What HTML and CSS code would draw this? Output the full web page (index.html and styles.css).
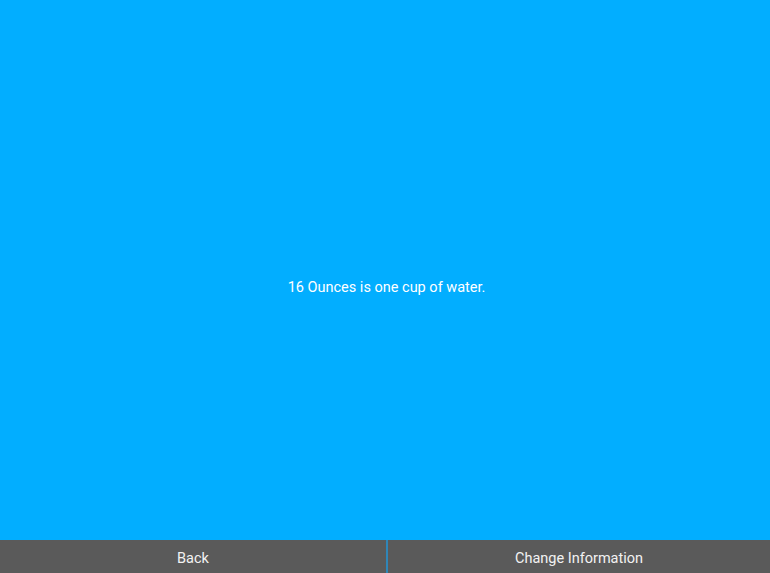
FILE: index.html
```html
<!DOCTYPE html>
<html>
<head>
<meta charset="utf-8">
<link rel="stylesheet" href="styles.css">
</head>
<body>
<div class="app">
  <main class="content">
    <p class="message">16 Ounces is one cup of water.</p>
  </main>
  <footer class="bar">
    <button class="btn">Back</button>
    <div class="divider"></div>
    <button class="btn">Change Information</button>
  </footer>
</div>
</body>
</html>
```
FILE: styles.css
```css
html, body {
  margin: 0;
  padding: 0;
  height: 100%;
}
body {
  font-family: Roboto, "Liberation Sans", sans-serif;
  background: #02aeff;
  color: #fff;
}
.app {
  display: flex;
  flex-direction: column;
  height: 573px;
}
.content {
  flex: 1;
  display: flex;
  align-items: center;
  justify-content: center;
  padding-top: 34px;
  padding-left: 3px;
}
.message {
  margin: 0;
  font-size: 14.5px;
}
.bar {
  height: 33px;
  display: grid;
  grid-template-columns: 386px 2px 1fr;
  background: #5a5a5a;
}
.btn {
  background: transparent;
  border: 0;
  color: #f2f2f2;
  font-family: Roboto, "Liberation Sans", sans-serif;
  font-size: 14.5px;
  padding: 4px 0 0;
  margin: 0;
}
.divider {
  background: #2f86b8;
}
```
